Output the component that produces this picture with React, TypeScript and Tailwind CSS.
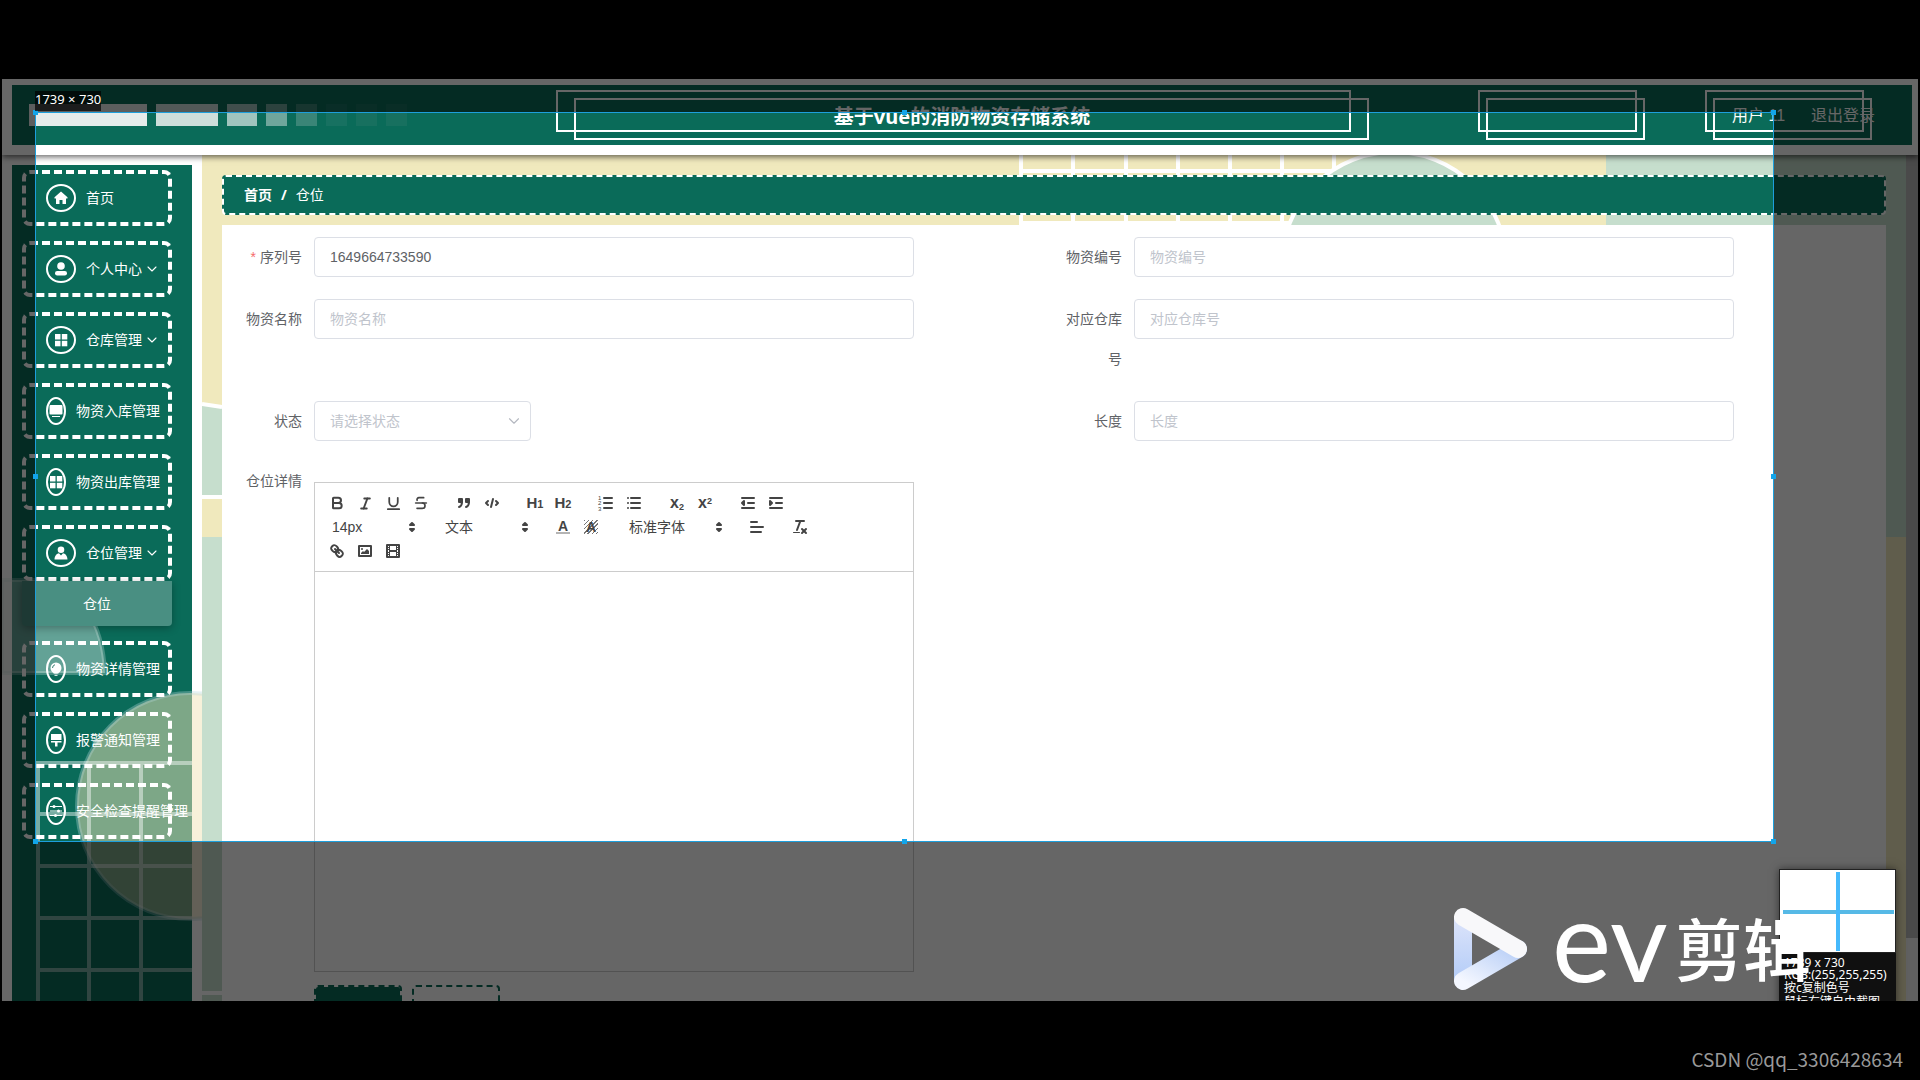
import { useState } from 'react'
import type { ReactNode } from 'react'
import { Bold, ChevronDown, Italic, Strikethrough, Underline } from 'lucide-react'

const menu = [
  { label: '首页', icon: 'home' },
  { label: '个人中心', icon: 'user', sub: true },
  { label: '仓库管理', icon: 'grid', sub: true },
  { label: '物资入库管理', icon: 'monitor', narrow: true },
  { label: '物资出库管理', icon: 'grid', narrow: true },
  { label: '仓位管理', icon: 'person', sub: true, open: true },
  { label: '物资详情管理', icon: 'bulb', narrow: true },
  { label: '报警通知管理', icon: 'brush', narrow: true },
  { label: '安全检查提醒管理', icon: 'sliders', narrow: true },
]

const bars = [
  'w-[118px] bg-[#e5eceb]',
  'w-[62px] bg-[#cddedb]',
  'w-[30px] bg-[#a0c4be]',
  'w-[21px] bg-[#6fa69c]',
  'w-[21px] bg-[#3a8577]',
  'w-[21px] bg-[#177161]',
  'w-[21px] bg-[#17705f]',
  'w-[21px] bg-[#17705f]',
]

const handles = [
  '-left-[3px] -top-[3px]',
  'left-1/2 -top-[3px] -ml-[3px]',
  '-right-[3px] -top-[3px]',
  '-left-[3px] top-1/2 -mt-[3px]',
  '-right-[3px] top-1/2 -mt-[3px]',
  '-left-[3px] -bottom-[3px]',
  'left-1/2 -bottom-[3px] -ml-[3px]',
  '-right-[3px] -bottom-[3px]',
]

const menuIcons: Record<string, ReactNode> = {
  home: <path d="M7 0.500L0.500 6.200V7.500H2V13H5.500V9H8.500V13H12V7.500H13.500V6.200Z" />,
  user: (
    <>
      <circle cx="7" cy="4" r="3.800" />
      <rect x="1" y="9" width="12" height="4.500" rx="2.200" />
    </>
  ),
  grid: (
    <>
      <rect x="1" y="1" width="5.500" height="5.500" />
      <rect x="7.800" y="1" width="5.500" height="5.500" />
      <rect x="1" y="7.800" width="5.500" height="5.500" />
      <rect x="7.800" y="7.800" width="5.500" height="5.500" />
    </>
  ),
  monitor: (
    <>
      <rect x="0.500" y="1" width="13" height="9.500" rx="1" />
      <rect x="3" y="12" width="8" height="1" />
    </>
  ),
  person: (
    <>
      <circle cx="7" cy="3.800" r="3.300" />
      <path d="M0.500 13.500C0.500 9.500 3 7.500 5 7.200L7 9.500L9 7.200C11 7.500 13.500 9.500 13.500 13.500Z" />
    </>
  ),
  bulb: (
    <>
      <circle cx="7" cy="6" r="5.500" />
      <rect x="4.500" y="10.500" width="5" height="1" />
      <rect x="5.500" y="12.800" width="3" height="1" />
      <path d="M3.500 6A3.500 3.500 0 0 1 6 2.700" stroke="#3b8275" strokeWidth="1" fill="none" />
    </>
  ),
  brush: (
    <>
      <rect x="2" y="1" width="10.500" height="6" />
      <path d="M2 8H12.500V9.500H8.500V13.500H6V9.500H2Z" />
    </>
  ),
  sliders: (
    <>
      <path d="M1 2.500H13M1 7H13M1 11.500H13" stroke="#fff" strokeWidth="1" />
      <circle cx="5" cy="2.500" r="1.500" />
      <circle cx="9.500" cy="7" r="1.500" />
      <circle cx="6.500" cy="11.500" r="1.500" />
    </>
  ),
}

const Glyph = ({ children }: { children: ReactNode }) => (
  <svg viewBox="0 0 18 18" className="h-[18px] w-[18px]" fill="none" stroke="#444" strokeWidth="2" strokeLinecap="round" strokeLinejoin="round">
    {children}
  </svg>
)

const Tool = ({ label, children }: { label: string; children: ReactNode }) => (
  <button type="button" aria-label={label} className="flex h-6 w-7 items-center justify-center text-[#444]">
    {children}
  </button>
)

const ToolGroup = ({ children }: { children: ReactNode }) => <span className="mr-[15px] flex">{children}</span>

const Picker = ({ label, className }: { label: string; className: string }) => (
  <button type="button" className={`flex h-6 items-center justify-between pl-[9px] text-sm text-[#444] ${className}`}>
    {label}
    <Glyph>
      <polygon points="7,11 9,13 11,11" />
      <polygon points="7,7 9,5 11,7" />
    </Glyph>
  </button>
)

const Toolbar = () => (
  <div className="flex flex-wrap border-b border-[#ccc] p-2">
    <ToolGroup>
      <Tool label="粗体"><Bold size={16} strokeWidth={3} /></Tool>
      <Tool label="斜体"><Italic size={15} strokeWidth={3} /></Tool>
      <Tool label="下划线"><Underline size={17} strokeWidth={2.5} /></Tool>
      <Tool label="删除线"><Strikethrough size={16} strokeWidth={2.5} /></Tool>
    </ToolGroup>
    <ToolGroup>
      <Tool label="引用">
        <Glyph>
          <rect x="4" y="5" width="3" height="3" fill="#444" />
          <rect x="11" y="5" width="3" height="3" fill="#444" />
          <path d="M7,8c0,4.031-3,5-3,5M14,8c0,4.031-3,5-3,5" />
        </Glyph>
      </Tool>
      <Tool label="代码">
        <Glyph>
          <polyline points="5 7 3 9 5 11" />
          <polyline points="13 7 15 9 13 11" />
          <line x1="10" x2="8" y1="5" y2="13" />
        </Glyph>
      </Tool>
    </ToolGroup>
    <ToolGroup>
      <Tool label="标题一"><span className="text-[15px] font-bold leading-4">H<span className="text-[11px]">1</span></span></Tool>
      <Tool label="标题二"><span className="text-[15px] font-bold leading-4">H<span className="text-[11px]">2</span></span></Tool>
    </ToolGroup>
    <ToolGroup>
      <Tool label="有序列表">
        <Glyph>
          <path d="M7 4H15M7 9H15M7 14H15" />
          <g fill="#444" stroke="none" fontSize="6">
            <text x="1" y="6">1</text>
            <text x="1" y="11">2</text>
            <text x="1" y="17">3</text>
          </g>
        </Glyph>
      </Tool>
      <Tool label="无序列表">
        <Glyph>
          <path d="M6 4H15M6 9H15M6 14H15M3 4H3M3 9H3M3 14H3" />
        </Glyph>
      </Tool>
    </ToolGroup>
    <ToolGroup>
      <Tool label="下标"><span className="text-base font-bold leading-4">x<sub className="text-[9px]">2</sub></span></Tool>
      <Tool label="上标"><span className="text-base font-bold leading-4">x<sup className="text-[9px]">2</sup></span></Tool>
    </ToolGroup>
    <ToolGroup>
      <Tool label="减少缩进">
        <Glyph>
          <path d="M3 4H15M9 9H15M3 14H15" />
          <polyline points="5 7 5 11 3 9 5 7" />
        </Glyph>
      </Tool>
      <Tool label="增加缩进">
        <Glyph>
          <path d="M3 4H15M9 9H15M3 14H15" />
          <polyline points="3 7 3 11 5 9 3 7" fill="#444" />
        </Glyph>
      </Tool>
    </ToolGroup>
    <ToolGroup>
      <Picker label="14px" className="w-[98px]" />
    </ToolGroup>
    <ToolGroup>
      <Picker label="文本" className="w-[98px]" />
    </ToolGroup>
    <ToolGroup>
      <Tool label="文字颜色"><span className="w-[14px] border-b-2 border-[#b4b4b4] text-center text-sm font-bold leading-3">A</span></Tool>
      <Tool label="背景颜色">
        <span className="w-[14px] bg-[repeating-linear-gradient(135deg,#777_0,#777_1px,transparent_1px,transparent_3px)] text-center text-sm font-bold leading-[14px]">A</span>
      </Tool>
    </ToolGroup>
    <ToolGroup>
      <Picker label="标准字体" className="w-[108px]" />
    </ToolGroup>
    <ToolGroup>
      <Tool label="对齐">
        <Glyph>
          <path d="M3 4H9M3 9H15M3 14H13" />
        </Glyph>
      </Tool>
    </ToolGroup>
    <ToolGroup>
      <Tool label="清除格式">
        <Glyph>
          <line x1="5" x2="13" y1="3" y2="3" />
          <line x1="6" x2="9.350" y1="12" y2="3" />
          <line x1="11" x2="15" y1="11" y2="15" />
          <line x1="15" x2="11" y1="11" y2="15" />
          <rect x="2" y="14" width="7" height="1" rx="0.500" fill="#444" stroke="none" />
        </Glyph>
      </Tool>
    </ToolGroup>
    <ToolGroup>
      <Tool label="链接">
        <Glyph>
          <line x1="7" x2="11" y1="7" y2="11" />
          <path d="M8.9,4.577a3.476,3.476,0,0,1,.36,4.679A3.476,3.476,0,0,1,4.577,8.9C3.185,7.5,2.035,6.4,4.217,4.217S7.5,3.185,8.9,4.577Z" />
          <path d="M13.423,9.1a3.476,3.476,0,0,0-4.679-.36,3.476,3.476,0,0,0,.36,4.679c1.392,1.392,2.5,2.542,4.679.36S14.815,10.5,13.423,9.1Z" />
        </Glyph>
      </Tool>
      <Tool label="图片">
        <Glyph>
          <rect x="3" y="4" width="12" height="10" />
          <circle cx="6" cy="7" r="1" fill="#444" stroke="none" />
          <polyline points="5 12 5 11 7 9 8 10 11 7 13 9 13 12 5 12" fill="#444" stroke="none" />
        </Glyph>
      </Tool>
      <Tool label="视频">
        <Glyph>
          <rect x="3" y="3" width="12" height="12" />
          <path d="M5 3H6V15H5ZM12 3H13V15H12ZM5 8H13V10H5ZM3 5H6V6H3ZM3 7H6V8H3ZM3 10H6V11H3ZM3 12H6V13H3ZM12 5H15V6H12ZM12 7H15V8H12ZM12 10H15V11H12ZM12 12H15V13H12Z" fill="#444" stroke="none" />
        </Glyph>
      </Tool>
    </ToolGroup>
  </div>
)

const Frame = ({ className, children }: { className: string; children?: ReactNode }) => (
  <div className={`relative flex h-[50px] items-center ${className}`}>{children}</div>
)

const Header = () => (
  <header className="relative z-10 bg-white pt-[6px] pr-[6px] pb-[10px] pl-[10px] shadow-[0_2px_6px_rgba(0,0,0,0.6)]">
    <div className="grid h-[60px] grid-cols-[1fr_auto_1fr] items-center bg-[#0a6b59] text-white">
      <div className="flex gap-[9px] pl-[17px]">
        {bars.map((bar, index) => (
          <div key={index} className={`h-[22px] ${bar}`} />
        ))}
      </div>
      <Frame className="w-[813px] justify-center pt-1">
        <div className="absolute top-0 right-[18px] bottom-2 left-0 border-2 border-white" />
        <div className="absolute top-2 right-0 bottom-0 left-[18px] border-2 border-white" />
        <h1 className="text-xl font-bold font-['Noto_Sans','Noto_Sans_CJK_SC',sans-serif]">基于vue的消防物资存储系统</h1>
      </Frame>
      <div className="flex justify-end gap-[60px] pr-10">
        <Frame className="w-[167px]">
          <div className="absolute top-0 right-2 bottom-2 left-0 border-2 border-white" />
          <div className="absolute top-2 right-0 bottom-0 left-2 border-2 border-white" />
        </Frame>
        <Frame className="w-[167px] gap-[26px] pt-[2px] pl-[27px] text-base whitespace-nowrap">
          <div className="absolute top-0 right-2 bottom-2 left-0 border-2 border-white" />
          <div className="absolute top-2 right-0 bottom-0 left-2 border-2 border-white" />
          <span>用户 11</span>
          <button type="button">退出登录</button>
        </Frame>
      </div>
    </div>
  </header>
)

const Sidebar = () => (
  <aside className="relative w-[200px] shrink-0 bg-white">
    <div className="absolute top-[10px] right-[10px] bottom-0 left-[10px] bg-[#0a6b59]" />
    <svg className="absolute inset-0 h-full w-full" aria-hidden="true">
      <path d="M0 425H32C80 430 101 470 103 518H0Z" fill="#ffeedd" fillOpacity="0.12" />
      <path d="M0 425H32C80 430 101 470 103 518H0Z" fill="#d8eeee" fillOpacity="0.34" stroke="#cfe6e2" strokeOpacity="0.3" strokeWidth="4" />
      <circle cx="188" cy="651" r="113" fill="#f0e4b6" fillOpacity="0.5" stroke="#b4d6da" strokeOpacity="0.35" strokeWidth="4" />
      <path d="M34 608H190M36 659H190M36 711H190M36 763H190M36 815H190M36 606V900M87 606V900M139 606V900" stroke="#fff" strokeOpacity="0.45" strokeWidth="4" fill="none" />
    </svg>
    <nav className="relative pt-[15px] pl-5 text-sm text-white">
      {menu.map((item) => (
        <div key={item.label} className="mb-[15px] w-[150px]">
          <a href="#" className="flex h-14 items-center rounded-lg border-4 border-dashed border-white pl-5 whitespace-nowrap">
            <span className={`mr-[10px] flex h-7 shrink-0 items-center justify-center rounded-[50%] border-2 border-white ${item.narrow ? 'w-5' : 'w-[30px]'}`}>
              <svg viewBox="0 0 14 14" className="h-[14px] w-[14px] shrink-0" fill="#fff">
                {menuIcons[item.icon]}
              </svg>
            </span>
            {item.label}
            {item.sub && <ChevronDown size={16} strokeWidth={1.6} className="ml-[2px]" />}
          </a>
          {item.open && (
            <a href="#" className="flex h-[45px] items-center justify-center rounded-b bg-[#498f82] shadow-[0_2px_8px_rgba(0,0,0,0.3)]">
              仓位
            </a>
          )}
        </div>
      ))}
    </nav>
  </aside>
)

// pale geometric wallpaper behind the form card
const Wallpaper = () => (
  <svg className="absolute inset-0 h-full w-full" aria-hidden="true">
    <rect width="100%" height="100%" fill="#f0e9bd" />
    <rect x="1404" width="300" height="382" fill="#c6decd" />
    <path d="M817 16H1134M817 68H1134M819 0V70M871 0V70M924 0V70M976 0V70M1028 0V70M1080 0V70M1132 0V70" stroke="#fff" strokeWidth="4" fill="none" />
    <circle cx="1192" cy="109" r="112" fill="#c6decd" stroke="#fff" strokeWidth="4" />
    <rect y="382" width="200" height="500" fill="#c6decd" />
    <path d="M0 249L20 252V342H0Z" fill="#c6decd" />
    <path d="M0 249L20 252M0 342H20M0 838H20" stroke="#fff" strokeWidth="4" fill="none" />
  </svg>
)

const Field = ({ id, label, required, children }: { id: string; label: string; required?: boolean; children: ReactNode }) => (
  <div className="mb-[22px] flex items-start">
    <label htmlFor={id} className="w-20 shrink-0 pr-3 text-right leading-10">
      {required && <span className="mr-1 text-[#f56c6c]">*</span>}
      {label}
    </label>
    {children}
  </div>
)

const inputStyle = 'mr-[140px] h-10 min-w-0 flex-1 rounded border border-[#dcdfe6] bg-white px-[15px] text-sm text-[#606266] placeholder:text-[#c0c4cc]'

const WarehouseForm = () => {
  const [serial, setSerial] = useState('1649664733590')

  return (
    <form className="relative mt-[10px] min-h-0 flex-1 bg-white px-3 pt-3 text-sm text-[#606266]">
      <div className="grid grid-cols-2">
        <Field id="serial" label="序列号" required>
          <input id="serial" className={inputStyle} value={serial} onChange={(e) => setSerial(e.target.value)} />
        </Field>
        <Field id="code" label="物资编号">
          <input id="code" className={inputStyle} placeholder="物资编号" />
        </Field>
        <Field id="name" label="物资名称">
          <input id="name" className={inputStyle} placeholder="物资名称" />
        </Field>
        <Field id="store" label="对应仓库号">
          <input id="store" className={inputStyle} placeholder="对应仓库号" />
        </Field>
        <Field id="state" label="状态">
          <div className="relative">
            <select id="state" defaultValue="" className="h-10 w-[217px] appearance-none rounded border border-[#dcdfe6] bg-white px-[15px] text-[#c0c4cc]">
              <option value="">请选择状态</option>
            </select>
            <ChevronDown size={18} strokeWidth={1.5} className="pointer-events-none absolute top-[11px] right-2 text-[#b4b8c0]" />
          </div>
        </Field>
        <Field id="length" label="长度">
          <input id="length" className={inputStyle} placeholder="长度" />
        </Field>
        <div className="flex items-start">
          <label htmlFor="detail" className="w-20 shrink-0 pr-3 text-right leading-9">仓位详情</label>
          <div className="mt-[19px] mr-[140px] min-w-0 flex-1 border border-[#ccc]">
            <Toolbar />
            <textarea id="detail" className="block h-[399px] w-full resize-none p-3" />
          </div>
        </div>
      </div>
      <div className="mt-[13px] ml-20 flex gap-[10px]">
        <button type="submit" aria-label="提交" className="h-10 w-[88px] rounded border-2 border-dashed border-[#0a6b59] bg-[#0a6b59] bg-clip-padding" />
        <button type="button" aria-label="返回" className="h-10 w-[88px] rounded border-2 border-dashed border-[#0a6b59] bg-white" />
      </div>
    </form>
  )
}

const Magnifier = () => (
  <div className="absolute top-[790px] right-[22px] w-[117px] bg-[#101010] text-xs leading-3 text-white shadow-[0_0_8px_rgba(0,0,0,0.5)] font-['Noto_Sans','Noto_Sans_CJK_SC',sans-serif]">
    <div className="flex h-[84px] items-center justify-center border border-[#222] bg-white">
      <svg viewBox="0 0 114 82" className="h-[82px] w-[114px]">
        <rect x="2" y="40" width="111" height="4" fill="#56b9e6" />
        <rect x="55" y="2" width="4" height="79" fill="#45b9fc" />
      </svg>
    </div>
    <div className="pt-1 pl-[5px] whitespace-nowrap">
      <p>1739 x 730</p>
      <p>RGB:(255,255,255)</p>
      <p className="pt-px">按c复制色号</p>
      <p className="pt-[2px]">鼠标右键自由截图</p>
    </div>
  </div>
)

const EvLogo = () => (
  <div className="absolute bottom-0 left-[1452px] flex items-center text-white">
    <svg viewBox="0 0 74 84" className="mr-6 h-[84px] w-[74px]">
      <defs>
        <linearGradient id="ev-left" x1="0" y1="0" x2="0" y2="1">
          <stop offset="0" stopColor="#dde4fa" />
          <stop offset="1" stopColor="#b3ccf8" />
        </linearGradient>
        <linearGradient id="ev-base" x1="0" y1="1" x2="1" y2="0">
          <stop offset="0" stopColor="#f4f7ff" />
          <stop offset="1" stopColor="#b6cdf6" />
        </linearGradient>
      </defs>
      <rect x="0" y="10" width="18" height="64" fill="url(#ev-left)" />
      <path d="M9 74L64 42" stroke="url(#ev-base)" strokeWidth="18" strokeLinecap="round" />
      <path d="M9 10L64 42" stroke="#f8f8fa" strokeWidth="18" strokeLinecap="round" />
    </svg>
    <span className="w-[123px] pb-5 text-[112px] leading-[84px] font-normal font-['Lato',sans-serif]">ev</span>
    <span className="pb-1 text-[68px] leading-[84px] font-medium font-['Noto_Sans_CJK_SC',sans-serif]">剪辑</span>
  </div>
)

const Selection = () => (
  <div className="absolute top-[33px] left-[33px] h-[730px] w-[1739px] border border-[#1d9fdc] shadow-[0_0_0_2000px_rgba(0,0,0,0.6)]">
    {handles.map((place) => (
      <span key={place} className={`absolute h-[5px] w-[5px] bg-[#12a5ea] ${place}`} />
    ))}
    <span className="absolute -top-[22px] -left-px bg-black/70 pb-1 text-[13px] leading-4 whitespace-nowrap text-white font-['Noto_Sans',sans-serif]">1739 × 730</span>
  </div>
)

export default function App() {
  return (
    <div className="flex h-screen flex-col bg-black px-[2px] pt-[79px] font-['Liberation_Sans','Noto_Sans_CJK_SC',sans-serif]">
      <div className="relative flex min-h-0 flex-1 flex-col overflow-hidden bg-white">
        <Header />
        <div className="flex min-h-0 flex-1">
          <Sidebar />
          <main className="relative flex min-w-0 flex-1 flex-col px-5 pt-5">
            <Wallpaper />
            <nav className="relative flex h-10 shrink-0 items-center rounded border-2 border-dashed border-white bg-[#0a6b59] px-5 text-sm text-white">
              <a href="#" className="font-bold">首页</a>
              <span className="mx-[9px] font-bold font-['Noto_Sans',sans-serif]">/</span>
              <span>仓位</span>
            </nav>
            <WarehouseForm />
          </main>
          <div className="w-3 shrink-0 bg-[#f1f1f1]">
            <div className="h-[783px] bg-[#b8b8b8]" />
          </div>
        </div>
        <div className="absolute inset-0 z-20 overflow-hidden">
          <Selection />
          <Magnifier />
          <EvLogo />
        </div>
      </div>
      <footer className="flex h-[79px] shrink-0 items-center justify-end pt-[38px] pr-[15px] text-[19px] text-[#999] font-['Noto_Sans_CJK_SC',sans-serif]">
        CSDN @qq_3306428634
      </footer>
    </div>
  )
}
